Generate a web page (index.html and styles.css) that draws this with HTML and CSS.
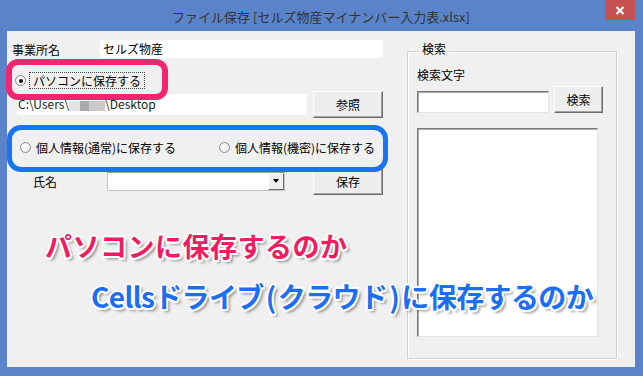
FILE: index.html
```html
<!DOCTYPE html>
<html lang="ja">
<head>
    <meta charset="UTF-8">
    <title>ファイル保存</title>
    <link rel="stylesheet" href="styles.css">
</head>
<body>
    <div class="window">
        <div class="titlebar">
            <span class="title">ファイル保存 [セルズ物産マイナンバー入力表.xlsx]</span>
            <span class="close">
                <svg width="10" height="9" viewBox="0 0 10 9"><path d="M1.5 1 L8.5 8 M8.5 1 L1.5 8" stroke="#fff" stroke-width="2"/></svg>
            </span>
        </div>
        <div class="client">
            <div class="main">
                <div class="row row-name">
                    <span class="label">事業所名</span>
                    <div class="field name-field">セルズ物産</div>
                </div>
                <div class="row row-pc">
                    <span class="radio checked"></span>
                    <span class="focus">パソコンに保存する</span>
                </div>
                <div class="row row-path">
                    <div class="field path-field">C:\Users\<span class="blur"></span>\Desktop</div>
                    <button class="btn btn-ref">参照</button>
                </div>
                <div class="row row-private">
                    <span class="option option-first"><span class="radio"></span>個人情報(通常)に保存する</span>
                    <span class="option"><span class="radio"></span>個人情報(機密)に保存する</span>
                </div>
                <div class="row row-person">
                    <span class="label person-label">氏名</span>
                    <div class="combo">
                        <span class="combo-text"></span>
                        <span class="combo-arrow"></span>
                    </div>
                    <button class="btn btn-save">保存</button>
                </div>
            </div>
            <fieldset class="search">
                <legend>検索</legend>
                <div class="search-label">検索文字</div>
                <div class="search-row">
                    <div class="sunken search-input"></div>
                    <button class="btn btn-search">検索</button>
                </div>
                <div class="sunken result-list"></div>
            </fieldset>
        </div>

        <div class="mark mark-pc"></div>
        <div class="mark mark-cloud"></div>
        <p class="note note-pc">パソコンに保存するのか</p>
        <p class="note note-cloud">Cellsドライブ<span class="paren">(</span>クラウド<span class="paren">)</span>に保存するのか</p>
    </div>
</body>
</html>
```

FILE: styles.css
```css
body {
    margin: 0;
    font-family: "Noto Sans CJK JP", sans-serif;
    font-size: 12px;
    color: #000;
}
.window {
    position: relative;
    width: 643px;
    height: 376px;
    box-sizing: border-box;
    padding: 0 8px 9px 7px;
    background-color: #5b83c9;
    display: flex;
    flex-direction: column;
    overflow: hidden;
}
.titlebar {
    position: relative;
    height: 31px;
    flex: none;
}
.title {
    display: block;
    text-align: center;
    font-size: 13px;
    line-height: 33px;
    color: #333;
}
.close {
    position: absolute;
    top: 0;
    right: 0;
    width: 30px;
    height: 20px;
    background-color: #c75050;
    display: flex;
    align-items: center;
    justify-content: center;
}
.client {
    flex: 1;
    background-color: #f0f0f0;
    display: flex;
    align-items: flex-start;
}
.main {
    width: 383px;
    flex: none;
}
.row {
    display: flex;
    align-items: center;
}
.field {
    background-color: #fff;
    box-sizing: border-box;
}
.row-name {
    margin-top: 9px;
    height: 18px;
}
.row-name .label {
    width: 88px;
    padding-left: 5px;
}
.name-field {
    width: 283px;
    height: 18px;
    line-height: 18px;
    padding-left: 3px;
}
.row-pc {
    margin-top: 14px;
    height: 17px;
    padding-left: 8px;
}
.radio {
    display: inline-block;
    position: relative;
    width: 11px;
    height: 11px;
    box-sizing: border-box;
    border: 1px solid #8c8c8c;
    border-radius: 50%;
    background: radial-gradient(circle at 40% 40%, #fff, #e6e6e6);
    flex: none;
}
.radio.checked::after {
    content: "";
    position: absolute;
    left: 2.5px;
    top: 2.5px;
    width: 4px;
    height: 4px;
    border-radius: 50%;
    background-color: #111;
}
.focus {
    margin-left: 3px;
    padding: 0 3px;
    line-height: 15px;
    border: 1px dotted #444;
}
.row-path {
    margin-top: 2px;
    height: 27px;
}
.path-field {
    margin-left: 10px;
    width: 290px;
    height: 21px;
    line-height: 19px;
    padding-left: 1px;
    color: #222;
}
.blur {
    display: inline-block;
    width: 36px;
    height: 10px;
    vertical-align: middle;
    background: linear-gradient(90deg, #e4e4e4 0 30%, #a9a9a9 30% 55%, #c9c9c9 55% 100%);
}
.btn {
    font: inherit;
    color: #000;
    padding: 0;
    background-color: #eeeeee;
    border: 1px solid;
    border-color: #fdfdfd #6b6b6b #6b6b6b #fdfdfd;
    box-shadow: inset -1px -1px 0 #a3a3a3;
}
.btn-ref {
    margin-left: 6px;
    width: 70px;
    height: 27px;
}
.row-private {
    margin-top: 21px;
    height: 16px;
    padding-left: 13px;
}
.option {
    display: flex;
    align-items: center;
}
.option .radio {
    margin-right: 5px;
}
.option-first {
    width: 199px;
}
.row-person {
    margin-top: 12px;
    height: 28px;
}
.person-label {
    padding-left: 26px;
    width: 74px;
}
.combo {
    width: 178px;
    height: 19px;
    box-sizing: border-box;
    border: 1px solid #c4c4c4;
    border-top-color: #a0a0a0;
    background-color: #fff;
    display: flex;
    justify-content: flex-end;
}
.combo-arrow {
    width: 16px;
    height: 100%;
    box-sizing: border-box;
    background-color: #eeeeee;
    border: 1px solid;
    border-color: #fdfdfd #6b6b6b #6b6b6b #fdfdfd;
    display: flex;
    align-items: center;
    justify-content: center;
}
.combo-arrow::after {
    content: "";
    border-left: 3.5px solid transparent;
    border-right: 3.5px solid transparent;
    border-top: 4px solid #000;
}
.btn-save {
    margin-left: 28px;
    width: 70px;
    height: 28px;
}
.search {
    margin: 10px 0 0 17px;
    width: 210px;
    height: 318px;
    box-sizing: border-box;
    padding: 6px 0 0 9px;
    border: 1px solid #d0d0d0;
    box-shadow: inset 1px 1px 0 #fff, 1px 1px 0 #fff;
}
.search legend {
    margin-left: 2px;
    padding: 0 3px 5px;
    line-height: 15px;
}
.search-label {
    line-height: 15px;
}
.search-row {
    margin-top: 4px;
    display: flex;
    align-items: flex-end;
}
.sunken {
    box-sizing: border-box;
    background-color: #fff;
    border: 1px solid;
    border-color: #7a7a7a #e3e3e3 #e3e3e3 #7a7a7a;
    box-shadow: inset 1px 1px 0 #a8a8a8;
}
.search-input {
    width: 132px;
    height: 22px;
}
.btn-search {
    margin-left: 5px;
    width: 49px;
    height: 27px;
}
.result-list {
    margin-top: 15px;
    width: 181px;
    height: 209px;
}
.mark {
    position: absolute;
    box-sizing: border-box;
}
.mark-pc {
    left: 6px;
    top: 59px;
    width: 162px;
    height: 41px;
    border: 6px solid #f2266e;
    border-radius: 12px;
}
.mark-cloud {
    left: 7px;
    top: 125px;
    width: 381px;
    height: 47px;
    border: 5px solid #1a73f0;
    border-radius: 14px;
}
.note {
    position: absolute;
    margin: 0;
    font-weight: 700;
    line-height: 1;
    white-space: nowrap;
    text-shadow:
        2px 0 0 #fff, -2px 0 0 #fff, 0 2px 0 #fff, 0 -2px 0 #fff,
        1.5px 1.5px 0 #fff, -1.5px 1.5px 0 #fff, 1.5px -1.5px 0 #fff, -1.5px -1.5px 0 #fff,
        3px 3px 3px rgba(0, 0, 0, 0.45);
}
.note-pc {
    left: 45px;
    top: 232px;
    font-size: 27px;
    letter-spacing: 0.5px;
    color: #ee1d61;
}
.note-cloud {
    left: 91px;
    top: 282px;
    font-size: 28px;
    letter-spacing: -0.6px;
    color: #1c6ef2;
}
.paren {
    margin: 0 2px;
}
```
